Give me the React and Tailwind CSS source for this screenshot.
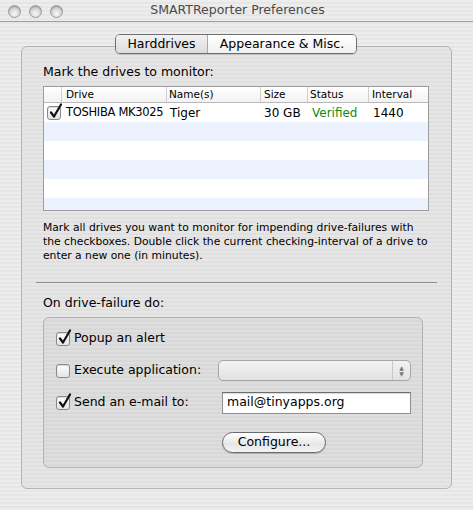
import React from 'react';

const stripes =
  'bg-[repeating-linear-gradient(180deg,#ededed_0px,#ededed_2px,#e6e6e6_2px,#e6e6e6_4px)]';

const CheckBox = ({ checked }) => (
  <span className="relative inline-block w-[14px] h-[14px] shrink-0 rounded-[3px] border border-[#8a8a8a] bg-[linear-gradient(180deg,#ffffff,#e4e4e4)] shadow-[inset_0_1px_1px_rgba(0,0,0,0.15)]">
    {checked && (
      <svg
        className="absolute left-[1px] top-[-4px]"
        width="14"
        height="16"
        viewBox="0 0 14 16"
      >
        <path
          d="M2 9.5 L5 13.5 L12 1.5"
          fill="none"
          stroke="#111"
          strokeWidth="2.2"
          strokeLinecap="round"
          strokeLinejoin="round"
        />
      </svg>
    )}
  </span>
);

const TrafficLight = () => (
  <span className="w-[13px] h-[13px] rounded-full border border-[#9a9a9a] bg-[radial-gradient(circle_at_50%_70%,#fafafa,#c9c9c9_70%,#b5b5b5)] shadow-[inset_0_1px_1px_rgba(0,0,0,0.2)]" />
);

const rows = [0, 1, 2, 3, 4, 5];

export default function App() {
  return (
    <div
      className={`w-[473px] h-[510px] overflow-hidden text-black ${stripes}`}
      style={{ fontFamily: '"DejaVu Sans", "Liberation Sans", sans-serif' }}
    >
      {/* title bar */}
      <div className="relative h-[22px] border-b border-[#9c9c9c] flex items-center">
        <div className="flex gap-[8px] pl-[8px] pt-[1px]">
          <TrafficLight />
          <TrafficLight />
          <TrafficLight />
        </div>
        <div className="absolute inset-0 flex items-center justify-center text-[12.5px] text-[#4a4a4a] pl-[2px]">
          SMARTReporter Preferences
        </div>
      </div>

      <div className="pl-[21px] pr-[21px] pt-[12px]">
        {/* tabs */}
        <div className="relative z-10 flex justify-center pr-[1px]">
          <div className="flex h-[20px] rounded-[5px] border border-[#6f6f6f] overflow-hidden text-[12.5px] shadow-[0_1px_1px_rgba(0,0,0,0.15)]">
            <div className="w-[92px] flex items-center justify-center bg-[linear-gradient(180deg,#f2f2f2,#dcdcdc)] border-r border-[#a8a8a8]">
              Harddrives
            </div>
            <div className="w-[148px] flex items-center justify-center bg-[linear-gradient(180deg,#ffffff,#f1f1f1)]">
              Appearance &amp; Misc.
            </div>
          </div>
        </div>

        {/* tab box */}
        <div className="-mt-[8px] h-[443px] rounded-[6px] border border-[#b4b4b4] bg-[repeating-linear-gradient(180deg,#e6e6e6_0px,#e6e6e6_2px,#e0e0e0_2px,#e0e0e0_4px)]">
          <div className="pl-[21px] pr-[22px] pt-[17px]">
            <div className="text-[12.5px] leading-[16px]">Mark the drives to monitor:</div>

            {/* table */}
            <div className="mt-[6px] h-[125px] border border-[#9d9d9d] bg-white overflow-hidden">
              <div className="grid grid-cols-[18px_105px_94px_47px_61px_1fr] h-[16px] border-b border-[#b9b9b9] bg-[linear-gradient(180deg,#ffffff,#f2f2f2)] text-[10.5px] leading-[15px]">
                <div className="border-r border-[#cfcfcf]" />
                <div className="pl-[4px] border-r border-[#cfcfcf]">Drive</div>
                <div className="pl-[2px] border-r border-[#cfcfcf]">Name(s)</div>
                <div className="pl-[3px] border-r border-[#cfcfcf]">Size</div>
                <div className="pl-[2px] border-r border-[#cfcfcf]">Status</div>
                <div className="pl-[3px]">Interval</div>
              </div>
              {rows.map((r) => (
                <div
                  key={r}
                  className={`grid grid-cols-[18px_105px_94px_47px_61px_1fr] h-[19px] items-center text-[12px] ${
                    r % 2 === 1 ? 'bg-[#edf3fe]' : 'bg-white'
                  }`}
                >
                  {r === 0 && (
                    <>
                      <div className="pl-[3px] flex items-center">
                        <CheckBox checked />
                      </div>
                      <div className="pl-[4px] whitespace-nowrap text-[11.5px] tracking-[-0.3px]">TOSHIBA MK3025</div>
                      <div className="pl-[3px]">Tiger</div>
                      <div className="pl-[3px] whitespace-nowrap">30 GB</div>
                      <div className="pl-[4px] text-[#128a12]">Verified</div>
                      <div className="pl-[4px]">1440</div>
                    </>
                  )}
                </div>
              ))}
            </div>

            <p className="mt-[10px] text-[10.75px] leading-[14px] whitespace-nowrap">
              Mark all drives you want to monitor for impending drive-failures with
              <br />
              the checkboxes. Double click the current checking-interval of a drive to
              <br />
              enter a new one (in minutes).
            </p>
          </div>

          <div className="mx-[14px] mt-[19px] border-t border-[#8e8e8e]" />

          <div className="pl-[21px] pr-[28px] pt-[12px]">
            <div className="text-[12.5px] leading-[16px]">On drive-failure do:</div>

            {/* group box */}
            <div className="mt-[6px] h-[151px] rounded-[6px] border border-[#b2b2b2] bg-[repeating-linear-gradient(180deg,#dedede_0px,#dedede_2px,#d8d8d8_2px,#d8d8d8_4px)] pl-[12px] pr-[11px] pt-[11px]">
              <div className="flex items-center h-[19px] gap-[4px] text-[12.5px]">
                <CheckBox checked />
                <span>Popup an alert</span>
              </div>

              <div className="mt-[13px] flex items-center h-[19px] text-[12.5px]">
                <div className="w-[162px] flex items-center gap-[4px]">
                  <CheckBox />
                  <span>Execute application:</span>
                </div>
                <div className="flex-1 h-[21px] rounded-[5px] border border-[#a6a6a6] bg-[linear-gradient(180deg,#f3f3f3,#e2e2e2)] flex justify-end">
                  <div className="w-[18px] border-l border-[#c8c8c8] flex flex-col items-center justify-center text-[6px] leading-[6px] text-[#777]">
                    <span>▲</span>
                    <span>▼</span>
                  </div>
                </div>
              </div>

              <div className="mt-[13px] flex items-center h-[19px] text-[12.5px]">
                <div className="w-[166px] flex items-center gap-[4px]">
                  <CheckBox checked />
                  <span>Send an e-mail to:</span>
                </div>
                <div className="flex-1 h-[22px] border border-[#8f8f8f] border-t-[#6e6e6e] bg-white flex items-center pl-[4px] shadow-[inset_0_1px_1px_rgba(0,0,0,0.15)]">
                  mail@tinyapps.org
                </div>
              </div>

              <div className="mt-[20px] pl-[166px]">
                <div className="w-[104px] h-[21px] rounded-full border border-[#6b6b6b] bg-[linear-gradient(180deg,#ffffff,#e6e6e6_60%,#f4f4f4)] flex items-center justify-center text-[12.5px] shadow-[0_1px_1px_rgba(0,0,0,0.2)]">
                  Configure...
                </div>
              </div>
            </div>
          </div>
        </div>
      </div>
    </div>
  );
}
